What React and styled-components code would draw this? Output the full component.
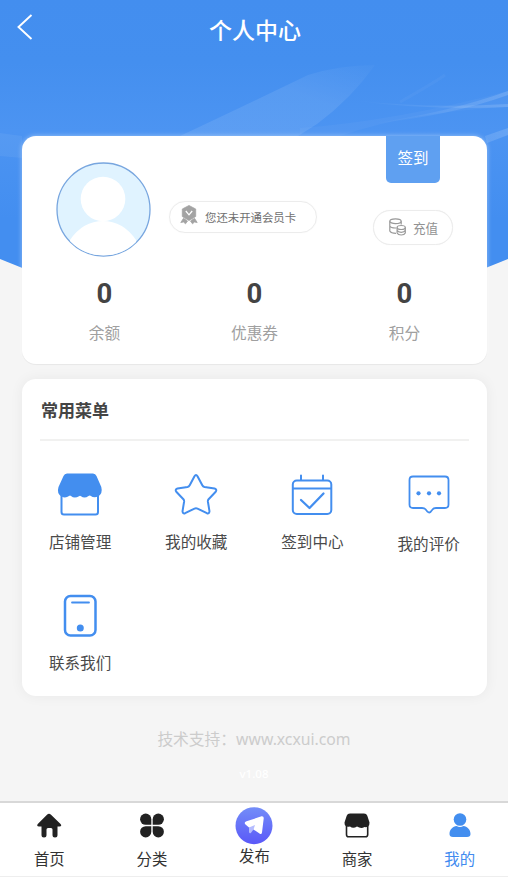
import React from "react";
import styled, { createGlobalStyle } from "styled-components";

const Global = createGlobalStyle`
  * { box-sizing: border-box; }
  body { margin: 0; background: #f5f5f5; font-family: "Noto Sans", "Noto Sans CJK SC", sans-serif; color: #4a4a4a; }
  svg { display: block; }
`;
const Page = styled.div`
  width: 508px; height: 877px; position: relative; overflow: hidden;
  display: flex; flex-direction: column; background: #f5f5f5; isolation: isolate;
`;
const Backdrop = styled.svg` position: absolute; top: 0; left: 0; z-index: -1; `;
const Header = styled.header`
  height: 136px; flex: none; display: grid; grid-template-columns: 54px 1fr 52px; align-items: start;
`;
const Back = styled.button`
  border: 0; background: none; padding: 14px 0 0 17px; height: 54px; color: #fff;
  display: flex; align-items: flex-start;
`;
const Title = styled.h1`
  margin: 0; padding-top: 13px; text-align: center; color: #fff;
  font-size: 23px; line-height: 34px; font-weight: 500;
`;
const Card = styled.section`
  margin: 0 21px 0 22px; flex: none; background: #fff; border-radius: 14px;
  height: ${(p) => p.$height}px;
`;
const ProfileCard = styled(Card)` box-shadow: 0 0 5px rgba(255,255,255,.45), 0 1px 1px rgba(0,0,0,.08); `;
const MenuCard = styled(Card)` margin-top: 15px; padding: 0 18px; box-shadow: 0 0 14px rgba(0,0,0,.055); `;
const Profile = styled.div` height: 130px; display: flex; padding-left: 34px; `;
const Avatar = styled.div` margin-top: 26px; width: 95px; `;
const MemberPill = styled.div`
  margin: 65px 0 0 18px; width: 148px; height: 32px; border: 1px solid #ececec; border-radius: 16px;
  display: flex; align-items: center; padding-left: 10px; gap: 7px; font-size: 11.4px; color: #707070; white-space: nowrap;
  box-shadow: 0 0 1px #eee;
`;
const MedalSvg = styled.svg` margin-bottom: 4px; `;
const Actions = styled.div`
  margin-left: 56px; width: 80px; display: flex; flex-direction: column; align-items: center;
`;
const SignButton = styled.button`
  width: 54px; height: 47px; border: 0; border-radius: 0 0 5px 5px; padding: 0 0 5px;
  background: #5fa0f1; color: #fff; font: inherit; font-size: 15.5px;
`;
const Recharge = styled.button`
  margin-top: 27px; width: 80px; height: 35px; border: 1px solid #ececec; border-radius: 18px; background: #fff;
  display: flex; align-items: center; padding: 0 0 0 15px; gap: 7px; font: inherit; font-size: 12.6px; color: #929292;
  white-space: nowrap; box-shadow: 0 0 1px #eee;
`;
const CoinsSvg = styled.svg` margin-bottom: 2px; `;
const Stats = styled.div`
  display: grid; grid-template-columns: repeat(3, 150px); padding-left: 7.5px;
`;
const Stat = styled.div` display: flex; flex-direction: column; align-items: center; `;
const Value = styled.strong` margin-top: 10px; font-family: Roboto, sans-serif; font-size: 27.5px; line-height: 36px; color: #444; `;
const Caption = styled.span` margin-top: 9px; font-size: 15.7px; line-height: 24px; color: #a0a0a0; `;
const MenuTitle = styled.h2`
  margin: 0; height: 62px; padding: 18px 0 0 1px; border-bottom: 2px solid #f1f1f0;
  font-size: 17px; line-height: 28px; font-weight: 600; color: #444;
`;
const MenuGrid = styled.div`
  display: grid; grid-template-columns: repeat(4, 116.2px); grid-auto-rows: 121px;
  margin: 29px -18px 0;
`;
const MenuItem = styled.div`
  display: flex; flex-direction: column; align-items: center; color: #4a4a4a;
  font-size: 15.6px; line-height: 24px; gap: ${(p) => p.$gap || 12}px;
`;
const Support = styled.p`
  margin: 31px 0 0; text-align: center; font-size: 15.75px; line-height: 24px; color: #ccc;
`;
const Version = styled.p`
  margin: 14px 0 0; text-align: center; font-size: 11.5px; line-height: 17px; font-weight: 500; color: #fff;
`;
const TabBar = styled.nav`
  margin-top: auto; height: 76px; flex: none; background: #fff; border-top: 2px solid #d8d8d8; border-bottom: 1px solid #eee;
  display: grid; grid-template-columns: repeat(5, 102.6px); margin-left: -2px;
`;
const Tab = styled.div`
  display: flex; flex-direction: column; align-items: center; font-size: 15.4px; line-height: 24px;
  color: ${(p) => (p.$active ? "#428bef" : "#333")};
  padding-top: ${(p) => (p.$raised ? 4 : 9)}px; gap: ${(p) => (p.$raised ? 0 : 8)}px;
`;

const BLUE = "#438eef";
const Line = styled.svg.attrs({ width: 48, height: 48, viewBox: "0 0 48 48" })`
  fill: none; stroke: ${BLUE}; stroke-width: 2; stroke-linecap: round; stroke-linejoin: round;
`;
const ShopIcon = () => (
  <Line>
    <path d="M5.500 25V42Q5.500 44.500 8 44.500H39.500Q42 44.500 42 42V25" />
    <path d="M11 3.500H37Q39.500 3.500 40.500 6L45.300 17Q47 23.500 42 26.500Q38 28.500 34.500 25.700Q33.500 25 32.500 26Q28.500 29 25 26.200Q24 25.300 23 26.200Q18.500 29 15 26Q14 25 13 26Q9.500 28.500 5.500 26.500Q.5 23.500 2.500 17L7.500 6Q8.500 3.500 11 3.500Z" fill={BLUE} stroke="none" />
  </Line>
);
const StarIcon = () => (
  <Line><path d="M22.500 6.200Q24 3.800 25.500 6.200L30.300 15.300Q31 16.600 32.500 16.900L42.500 18.500Q45.300 19.500 43.700 21.800L36.600 29.200Q35.700 30.300 35.900 31.700L37.500 41.300Q37.300 44 34.900 43.200L25.500 38.600Q24 37.900 22.500 38.600L13.100 43.200Q10.700 44 10.500 41.300L12.100 31.700Q12.300 30.300 11.400 29.200L4.300 21.800Q2.700 19.500 5.500 18.500L15.500 16.900Q17 16.600 17.700 15.300Z" /></Line>
);
const CalendarIcon = () => (
  <Line><rect x="4.800" y="10.500" width="38.500" height="33.500" rx="4" /><path d="M5 18.500H43M13 5.500V10M35 5.500V10" /><path d="M13 30L21.500 38L35.500 23.500" strokeWidth="2.300" /></Line>
);
const CommentIcon = () => (
  <Line><path d="M8 6.500H40Q43.500 6.500 43.500 10V34.500Q43.500 38 40 38H31Q28.500 38 27.500 39.500L25.500 42Q24 43.200 22.500 41.700L20.500 39.200Q19.500 38 17 38H8Q4.500 38 4.500 34.500V10Q4.500 6.500 8 6.500Z" strokeWidth="1.800" /><g fill={BLUE} stroke="none"><circle cx="13.500" cy="23.300" r="2.100" /><circle cx="24" cy="23.300" r="2.100" /><circle cx="34" cy="23.300" r="2.100" /></g></Line>
);
const PhoneIcon = () => (
  <Line><rect x="9" y="5" width="30.500" height="39.500" rx="5.500" strokeWidth="2.500" /><path d="M16 11.500H33" strokeWidth="1.800" /><circle cx="24.300" cy="37" r="3.500" fill={BLUE} stroke="none" /></Line>
);
const menu = [
  ["店铺管理", ShopIcon], ["我的收藏", StarIcon], ["签到中心", CalendarIcon], ["我的评价", CommentIcon, 13.5], ["联系我们", PhoneIcon],
];
const HomeIcon = () => (
  <svg width="28" height="28" viewBox="0 0 28 28" fill="#222"><path d="M12 2.700Q14 .8 16 2.700L25.300 11.700Q27.500 14.200 24.500 14.500H22.500V23Q22.500 25.500 20 25.500Q17.500 25.500 17.500 23V17.500Q17.500 16 16 16H13Q11.500 16 11.500 17.500V23Q11.500 25.500 9 25.500Q6.500 25.500 6.500 23V14.500H4Q1 14.200 3 11.700Z" /></svg>
);
const ClassIcon = () => (
  <svg width="28" height="28" viewBox="0 0 28 28" fill="#222"><path d="M13.300 12.800V7.200A5.600 5.600 0 1 0 7.700 12.800Z" /><path d="M14.700 12.800V7.200A5.600 5.600 0 1 1 20.300 12.800Z" /><path d="M13.300 14.200V19.800A5.600 5.600 0 1 1 7.700 14.200Z" /><path d="M14.700 14.200V19.800A5.600 5.600 0 1 0 20.300 14.200Z" /></svg>
);
const PublishIcon = () => (
  <svg width="38" height="38" viewBox="0 0 38 38"><defs><linearGradient id="publish" x2="0" y2="1"><stop stopColor="#738df8" /><stop offset="1" stopColor="#5a58f8" /></linearGradient></defs><circle cx="19" cy="18.700" r="18.500" fill="url(#publish)" /><path d="M26.500 9.300Q29 9 28.700 11.500L27 25.500Q26.500 28 24.500 26.500L18.500 22.500L14 20.500L10.500 17.500Q8.500 15.500 11.500 14.300Z" fill="#fff" /><path d="M14 20.500L20 18L18.500 22.500L15.800 26Q14 27 14 24.500Z" fill="#b5bcff" /></svg>
);
const MerchantIcon = () => (
  <svg width="28" height="28" viewBox="0 0 28 28"><path d="M3.500 14V22.500Q3.500 24.800 5.500 24.800H22.500Q24.700 24.800 24.700 22.500V14" fill="none" stroke="#222" strokeWidth="1.600" /><path d="M7 1.500H21Q23.500 1.500 24.300 3.700L26.500 10.500Q26.500 16 21.500 15Q18 17 14 14.500Q10 17 7 14.500Q1.500 16 1.500 10.500L3.700 3.700Q4.500 1.500 7 1.500Z" fill="#222" /></svg>
);
const UserIcon = () => (
  <svg width="28" height="28" viewBox="0 0 28 28" fill={BLUE}><circle cx="14" cy="7.500" r="6.300" /><path d="M3.500 22C3.500 17.500 7 14.500 10.500 14.100Q14 15.800 17.500 14.100C21 14.500 24.500 17.500 24.500 22Q24.500 25 21 25H7Q3.500 25 3.500 22Z" /></svg>
);
const tabs = [["首页", HomeIcon], ["分类", ClassIcon], ["发布", PublishIcon], ["商家", MerchantIcon], ["我的", UserIcon]];

const Scene = () => (
  <Backdrop width="508" height="280" viewBox="0 0 508 280">
    <defs>
      <linearGradient id="sky" x2="0" y2="1"><stop stopColor="#438eef" /><stop offset=".2" stopColor="#448fef" /><stop offset=".42" stopColor="#4c94f2" /><stop offset=".7" stopColor="#438ef0" /></linearGradient>
      <linearGradient id="ray" x1="0" y1="1" x2="1" y2="0"><stop stopColor="#fff" stopOpacity=".09" /><stop offset=".6" stopColor="#fff" stopOpacity=".09" /><stop offset="1" stopColor="#fff" stopOpacity=".02" /></linearGradient>
      <linearGradient id="streak"><stop stopColor="#fff" stopOpacity="0" /><stop offset="1" stopColor="#fff" stopOpacity=".15" /></linearGradient>
    </defs>
    <path d="M0 0H508V259Q254 367 0 259Z" fill="url(#sky)" />
    <path d="M180 136Q250 103 308 75Q340 65 375 65Q352 98 317 124L298 136Z" fill="url(#ray)" />
    <path d="M300 128Q395 121 508 91V107Q410 112 340 136H300Z" fill="#fff" fillOpacity=".035" />
    <path d="M350 100Q430 109 508 104V107Q430 111 350 100Z" fill="url(#streak)" />
    <path d="M370 124Q450 112 508 91V95Q450 116 370 124ZM485 136L508 128V135L487 143Z" fill="url(#streak)" />
    <path d="M400 102Q432 84 445 75" stroke="#fff" strokeOpacity=".035" strokeWidth="3" fill="none" />
    <path d="M0 133L22 136V158L0 156Z" fill="#fff" fillOpacity=".06" />
  </Backdrop>
);
const Portrait = () => (
  <svg width="95" height="95" viewBox="0 0 95 95"><defs><clipPath id="face"><circle cx="47.500" cy="47.500" r="46" /></clipPath></defs><circle cx="47.500" cy="47.500" r="46.500" fill="#e0f3ff" stroke="#78a6df" strokeWidth="1.300" /><g fill="#fff" clipPath="url(#face)"><circle cx="47" cy="37" r="22.300" /><path d="M14 78Q27 59 47 59T80 78V95H14Z" /></g></svg>
);
const Medal = () => (
  <MedalSvg width="18" height="20" viewBox="0 0 18 20" fill="#a3a3a3"><path d="M9 .5L15.700 4V11.500L9 15.500L2.300 11.500V4ZM3.500 13.300L7.500 16L5.500 18.800L3.500 17L.8 17.500ZM14.500 13.300L10.500 16L12.500 18.800L14.500 17L17.200 17.500Z" stroke="#a3a3a3" strokeWidth=".8" strokeLinejoin="round" /><path d="M5.800 6L9 9.800L12.200 6" fill="none" stroke="#fff" strokeWidth="1.300" /></MedalSvg>
);
const Coins = () => (
  <CoinsSvg width="17" height="18" viewBox="0 0 17 18" fill="none" stroke="#999" strokeWidth="1.200"><ellipse cx="6.500" cy="3.200" rx="5.700" ry="2.400" /><path d="M.8 3.200V13Q2 15.300 7 15.300M12.200 3.200V6.500M.8 8Q2 10.200 7 10" /><ellipse cx="12.200" cy="9.500" rx="4.100" ry="2" /><path d="M8.100 9.500V15Q9 17 12.200 17T16.300 15V9.500M8.100 12.300Q9 14.300 12.200 14.300T16.300 12.300" /></CoinsSvg>
);

export default function App() {
  return (
    <Page>
      <Global />
      <Scene />
      <Header>
        <Back aria-label="返回"><svg width="16" height="26" viewBox="0 0 16 26" fill="none" stroke="currentColor" strokeWidth="1.900"><path d="M14.500 1L1.500 13L14.500 25" /></svg></Back>
        <Title>个人中心</Title>
      </Header>
      <ProfileCard $height={228}>
        <Profile>
          <Avatar><Portrait /></Avatar>
          <MemberPill><Medal />您还未开通会员卡</MemberPill>
          <Actions><SignButton>签到</SignButton><Recharge><Coins />充值</Recharge></Actions>
        </Profile>
        <Stats>
          {["余额", "优惠券", "积分"].map((label) => <Stat key={label}><Value>0</Value><Caption>{label}</Caption></Stat>)}
        </Stats>
      </ProfileCard>
      <MenuCard $height={317}>
        <MenuTitle>常用菜单</MenuTitle>
        <MenuGrid>
          {menu.map(([label, Icon, gap]) => <MenuItem key={label} $gap={gap}><Icon />{label}</MenuItem>)}
        </MenuGrid>
      </MenuCard>
      <Support>技术支持：www.xcxui.com</Support>
      <Version>v1.08</Version>
      <TabBar>
        {tabs.map(([label, Icon], i) => <Tab key={label} $raised={i === 2} $active={i === 4}><Icon />{label}</Tab>)}
      </TabBar>
    </Page>
  );
}
